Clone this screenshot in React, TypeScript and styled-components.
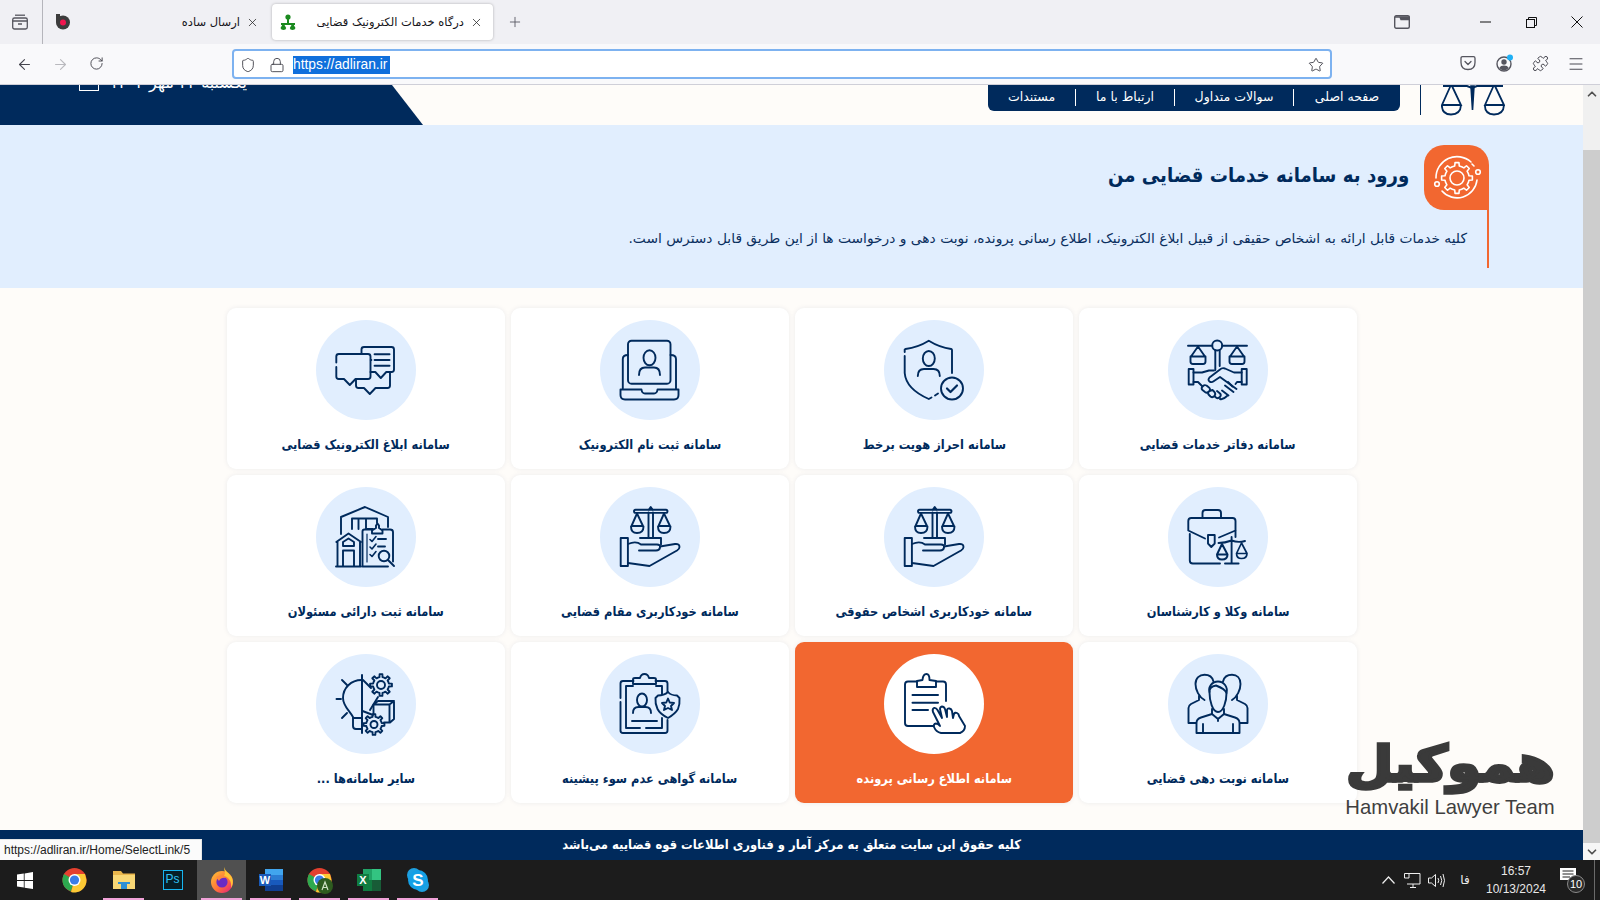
import React from "react";
import styled, { createGlobalStyle } from "styled-components";
import {
  ArrowLeft, ArrowRight, RotateCw, Shield, Lock, Star, X, Plus, Menu, Puzzle, ChevronUp, ChevronDown,
} from "lucide-react";

const NAVY = "#002a5c";
const ORANGE = "#f26730";
const FONT = `"DejaVu Sans", "Noto Sans", sans-serif`;

const Global = createGlobalStyle`
  html, body { margin: 0; padding: 0; width: 1600px; height: 900px; overflow: hidden; }
  body { font-family: ${FONT}; background: #fff; }
  * { box-sizing: border-box; }
`;

const Screen = styled.div`
  position: relative;
  width: 1600px;
  height: 900px;
  display: flex;
  flex-direction: column;
  overflow: hidden;
`;

/* ---------- browser chrome ---------- */
const TabBar = styled.div`
  height: 44px;
  background: #f0f0f4;
  display: flex;
  align-items: center;
  color: #3b3b45;
`;
const TabManager = styled.div`
  width: 43px;
  height: 44px;
  padding-right: 2px;
  border-right: 1px solid #b5b5bb;
  display: flex;
  align-items: center;
  justify-content: center;
`;
const InactiveTab = styled.div`
  width: 229px;
  height: 36px;
  display: flex;
  align-items: center;
  padding: 0 13px 0 12px;
`;
const TabFavicon = styled.div`
  width: 16px;
  height: 16px;
  flex: none;
  display: flex;
`;
const TabTitle = styled.span`
  flex: 1;
  direction: rtl;
  text-align: right;
  font-size: 11.5px;
  color: #15141a;
  white-space: nowrap;
  padding-right: 6px;
`;
const ActiveTab = styled(InactiveTab)`
  width: 221px;
  background: #fff;
  border-radius: 4px;
  box-shadow: 0 0 3px rgba(0, 0, 0, 0.28);
  padding: 0 10px 0 8px;
`;
const NewTab = styled.div`
  width: 44px;
  display: flex;
  justify-content: center;
`;
const WindowControls = styled.div`
  margin-left: auto;
  display: flex;
  align-items: center;
`;
const WinButton = styled.div<{ $w: number; $gap?: number }>`
  width: ${(p) => p.$w}px;
  margin-left: ${(p) => p.$gap ?? 0}px;
  display: flex;
  justify-content: center;
  color: #111;
`;

const NavBar = styled.div`
  height: 41px;
  background: #f9f9fb;
  border-bottom: 1px solid #cfcfd8;
  display: flex;
  align-items: center;
  color: #45454e;
`;
const NavButton = styled.div<{ $dim?: boolean }>`
  width: 36px;
  display: flex;
  justify-content: center;
  opacity: ${(p) => (p.$dim ? 0.35 : 1)};
`;
const NavButtons = styled.div`
  width: 232px;
  padding-left: 6px;
  display: flex;
`;
const UrlBar = styled.div`
  width: 1100px;
  height: 30px;
  background: #fff;
  border: 2px solid #7db2f0;
  border-radius: 4px;
  display: flex;
  align-items: center;
  padding: 1px 5px 0 6px;
  color: #45454e;
`;
const UrlIcon = styled.div<{ $w: number }>`
  width: ${(p) => p.$w}px;
  display: flex;
  justify-content: flex-start;
`;
const UrlText = styled.span`
  background: #0f6fdc;
  color: #fff;
  font-family: "Liberation Sans", sans-serif;
  font-size: 13.8px;
  line-height: 18px;
  width: 97px;
  white-space: nowrap;
`;
const UrlStar = styled.div`
  margin-left: auto;
  display: flex;
  margin-right: 1px;
`;
const NavTools = styled.div`
  flex: 1;
  display: flex;
  justify-content: flex-end;
  padding-right: 6px;
`;

/* ---------- page ---------- */
const Viewport = styled.div`
  flex: 1;
  min-height: 0;
  display: flex;
`;
const Page = styled.div`
  width: 1583px;
  display: flex;
  flex-direction: column;
  background: #fefcf9;
  color: ${NAVY};
`;
const Header = styled.header`
  height: 40px;
  flex: none;
  display: flex;
  justify-content: space-between;
  overflow: hidden;
`;
const DateBand = styled.div`
  width: 423px;
  height: 40px;
  background: ${NAVY};
  clip-path: polygon(0 0, 392px 0, 100% 100%, 0 100%);
  color: #fff;
  display: flex;
  padding-left: 79px;
  align-items: flex-start;
  gap: 9px;
`;
const DateText = styled.span`
  direction: rtl;
  font-size: 16px;
  line-height: 18px;
  margin-top: -11px;
  white-space: nowrap;
  width: 139px;
`;
const CalendarMark = styled.div`
  width: 20px;
  height: 6px;
  border: 1px solid #fff;
  border-top: none;
  border-radius: 0 0 1px 1px;
`;
const HeaderRight = styled.div`
  display: flex;
  padding-right: 78px;
  direction: rtl;
`;
const ScalesSlot = styled.div`
  width: 64px;
  height: 31px;
  display: flex;
`;
const HeaderDivider = styled.div`
  width: 1px;
  height: 30px;
  background: ${NAVY};
  margin: 0 20px;
`;
const MainNav = styled.nav`
  height: 26px;
  background: ${NAVY};
  border-radius: 0 0 6px 6px;
  display: flex;
  align-items: flex-start;
  padding-top: 4px;
`;
const MainNavItem = styled.a<{ $w: number }>`
  width: ${(p) => p.$w}px;
  height: 17px;
  display: flex;
  align-items: center;
  justify-content: center;
  padding-bottom: 3px;
  color: #fff;
  font-size: 12.5px;
  white-space: nowrap;
  border-left: 1px solid #fff;
  &:last-child { border-left: none; }
`;

const Hero = styled.section`
  height: 163px;
  flex: none;
  background: #e1eefe;
  padding: 20px 94px 0 0;
  direction: rtl;
`;
const HeroHead = styled.div`
  display: flex;
  align-items: center;
  gap: 15px;
`;
const GearBox = styled.div`
  width: 65px;
  height: 65px;
  flex: none;
  background: ${ORANGE};
  border-radius: 20px 20px 0 20px;
  display: flex;
  align-items: center;
  justify-content: center;
`;
const HeroTitle = styled.h1`
  margin: 0 0 5px;
  font-size: 20px;
  font-weight: 700;
  color: ${NAVY};
  white-space: nowrap;
  transform: scaleX(0.907);
  transform-origin: right center;
`;
const HeroBody = styled.div`
  height: 58px;
  border-right: 2px solid ${ORANGE};
  padding: 18px 20px 0 0;
`;
const HeroText = styled.p`
  margin: 0;
  font-size: 13.8px;
  line-height: 20px;
  color: #0b2f5e;
  white-space: nowrap;
`;

const Grid = styled.main`
  flex: 1;
  min-height: 0;
  padding: 20px 226px 0 227px;
  display: grid;
  grid-template-columns: repeat(4, 278px);
  grid-auto-rows: 161px;
  gap: 6px;
  direction: rtl;
  align-content: start;
`;
const Card = styled.a<{ $active?: boolean }>`
  background: ${(p) => (p.$active ? ORANGE : "#fff")};
  border-radius: 9px;
  box-shadow: 0 0 5px rgba(0, 42, 92, 0.08);
  display: flex;
  flex-direction: column;
  align-items: center;
  padding-top: 12px;
`;
const Circle = styled.div<{ $active?: boolean }>`
  width: 100px;
  height: 100px;
  border-radius: 50%;
  background: ${(p) => (p.$active ? "#fff" : "#e1eefe")};
  flex: none;
`;
const CardLabel = styled.span<{ $active?: boolean }>`
  margin-top: 15px;
  font-size: 13px;
  line-height: 20px;
  font-weight: 700;
  color: ${(p) => (p.$active ? "#fff" : NAVY)};
  white-space: nowrap;
  transform: scaleX(0.88);
`;
const Footer = styled.footer`
  height: 30px;
  flex: none;
  background: ${NAVY};
  color: #fff;
  direction: rtl;
  display: flex;
  align-items: center;
  justify-content: center;
  padding-bottom: 2px;
`;
const FooterText = styled.span`
  font-size: 13px;
  font-weight: 700;
  white-space: nowrap;
  transform: scaleX(0.89);
`;

const ScrollBar = styled.div`
  width: 17px;
  background: #f0f0f0;
  display: flex;
  flex-direction: column;
  align-items: center;
  color: #505050;
`;
const ScrollArrow = styled.div<{ $light?: boolean }>`
  height: 17px;
  width: 100%;
  flex: none;
  display: flex;
  align-items: center;
  justify-content: center;
  background: ${(p) => (p.$light ? "#f6f6f6" : "transparent")};
`;
const ScrollTrack = styled.div`
  flex: 1;
  width: 100%;
  padding-top: 48px;
  display: flex;
`;
const ScrollThumb = styled.div`
  flex: 1;
  background: #cdcdcd;
`;

/* ---------- overlays ---------- */
const StatusTip = styled.div`
  position: absolute;
  left: 0;
  bottom: 40px;
  width: 202px;
  height: 21px;
  background: #fbfbfb;
  border-top: 1px solid #e6e6e6;
  border-right: 1px solid #e6e6e6;
  color: #222;
  font-family: "Liberation Sans", sans-serif;
  font-size: 12px;
  line-height: 20px;
  padding-left: 4px;
  white-space: nowrap;
`;
const Watermark = styled.div`
  position: absolute;
  left: 1344px;
  top: 731px;
  width: 212px;
  height: 90px;
  display: flex;
  flex-direction: column;
  align-items: center;
  pointer-events: none;
`;
const WatermarkFa = styled.div`
  direction: rtl;
  font-family: ${FONT};
  font-weight: 700;
  font-size: 56px;
  line-height: 65px;
  height: 65px;
  color: #3a3a3a;
  -webkit-text-stroke: 4px #3a3a3a;
  white-space: nowrap;
  transform: scale(0.96, 0.88);
`;
const WatermarkEn = styled.div`
  font-family: "Liberation Sans", sans-serif;
  font-size: 20.3px;
  line-height: 22px;
  color: #3f3f3f;
  white-space: nowrap;
`;

/* ---------- taskbar ---------- */
const Taskbar = styled.div`
  height: 40px;
  flex: none;
  background: #1c1c1c;
  display: flex;
  align-items: center;
  color: #fff;
`;
const StartButton = styled.div`
  width: 50px;
  height: 40px;
  display: flex;
  align-items: center;
  justify-content: center;
`;
const TaskIcon = styled.div<{ $active?: boolean; $open?: boolean }>`
  position: relative;
  width: 49px;
  height: 40px;
  display: flex;
  align-items: center;
  justify-content: center;
  background: ${(p) => (p.$active ? "#505050" : "transparent")};
  &::after {
    content: "";
    display: ${(p) => (p.$open ? "block" : "none")};
    position: absolute;
    left: 4px;
    right: 4px;
    bottom: 0;
    height: 2px;
    background: #f0a2d8;
  }
`;
const Tray = styled.div`
  margin-left: auto;
  display: flex;
  align-items: center;
  height: 40px;
`;
const TrayIcon = styled.div<{ $w: number }>`
  width: ${(p) => p.$w}px;
  display: flex;
  justify-content: center;
`;
const Lang = styled.span`
  font-size: 12px;
  color: #eee;
  width: 34px;
  text-align: center;
`;
const Clock = styled.div`
  width: 68px;
  text-align: center;
  font-family: "Liberation Sans", sans-serif;
  font-size: 12px;
  line-height: 18px;
  color: #e8e8e8;
`;
const Notify = styled.div`
  width: 34px;
  margin-left: 10px;
  position: relative;
  height: 24px;
`;
const NotifyCount = styled.span`
  position: absolute;
  left: 7px;
  top: 7px;
  width: 18px;
  height: 18px;
  border: 1px solid #8a8a8a;
  border-radius: 50%;
  background: #2a2a2a;
  font-family: "Liberation Sans", sans-serif;
  font-size: 11px;
  line-height: 16px;
  text-align: center;
  color: #fff;
`;
const DesktopEdge = styled.div`
  width: 1px;
  height: 40px;
  background: #6a6a6a;
  margin-right: 5px;
`;
const MessageSvg = styled.svg`
  position: absolute;
  left: 0;
  top: 0;
`;

/* ---------- drawings ---------- */
const gearPath = (cx: number, cy: number, ro: number, ri: number, n: number) => {
  let d = "";
  const step = (Math.PI * 2) / n;
  for (let i = 0; i < n; i++) {
    const a = i * step;
    const pts: [number, number][] = [
      [a - step * 0.5, ri],
      [a - step * 0.24, ri],
      [a - step * 0.16, ro],
      [a + step * 0.16, ro],
      [a + step * 0.24, ri],
    ];
    pts.forEach(([t, r], k) => {
      d += `${i === 0 && k === 0 ? "M" : "L"}${(cx + r * Math.cos(t)).toFixed(2)} ${(cy + r * Math.sin(t)).toFixed(2)}`;
    });
  }
  return d + "Z";
};

const Svg100: React.FC<{ children: React.ReactNode }> = ({ children }) => (
  <svg width="100" height="100" viewBox="0 0 100 100" fill="none" stroke={NAVY} strokeWidth="1.9" strokeLinecap="round" strokeLinejoin="round">
    {children}
  </svg>
);

const IconHandshake = () => (
  <Svg100>
    <path d="M20 25.7H44.3M54.2 25.7H79" />
    <circle cx="49.2" cy="25.5" r="5" />
    <path d="M47.3 30.3V50M51.7 30.3V46" />
    <path d="M30 26.5L23 36.5H37L30 26.5ZM22.5 36.5V41.5Q22.5 44 25 44H35Q37.5 44 37.5 41.5V36.5" />
    <path d="M69 26.5L62 36.5H76L69 26.5ZM61.5 36.5V41.5Q61.5 44 64 44H74Q76.5 44 76.5 41.5V36.5" />
    <rect x="20.7" y="49" width="4.8" height="15.5" />
    <rect x="73.7" y="49" width="5" height="15.5" />
    <path d="M25.5 52.5H34L41 50.5H46M73.7 52.5H66L57 48.5Q54 47.5 52 49.5L41.5 57.5Q39.5 60 41.5 61.5Q43.5 63 46 61L52 57L68.5 69" />
    <path d="M25.5 62H30L34.5 66.5" />
    <path d="M73.7 62H69L67.5 64M64.5 66.5L60 62M65.5 72L57 65.5M60.5 75.5L54 70.5M52 79Q55 80 59 76" />
    <path d="M35 66Q32.5 68 34.5 70L37 72Q39 73.5 41 71.5Q43 69 41 67.5L38.5 65.5Q36.5 64.5 35 66ZM41.5 71Q39 73 41 75L42.5 76.5Q44.5 78 46.5 76Q48 74 46.5 72L44.5 70ZM46.5 76L48 77.5Q50 79 52 77Q53.5 75 52 73.5L49 71" />
  </Svg100>
);
const IconShieldUser = () => (
  <Svg100>
    <path d="M20.7 32V29.5L21.5 29Q34 27.5 44.8 20.8Q55.5 27.5 67.2 29Q68 29.2 68 30V53" />
    <path d="M20.7 36V53Q22 69 44.8 79L47.5 77.5M51 75.5L54 73.5" />
    <ellipse cx="44.8" cy="38.5" rx="6" ry="7.5" />
    <path d="M33.8 56Q33.8 49 40 49H49.5Q55.8 49 55.8 56" />
    <circle cx="68" cy="68.5" r="11" />
    <path d="M63 68.5L66.5 72L73 65.5" strokeWidth="2.2" />
  </Svg100>
);
const IconLaptopUser = () => (
  <Svg100>
    <rect x="28" y="20.7" width="42.5" height="43" rx="3.5" />
    <ellipse cx="49.5" cy="37.8" rx="6" ry="7.5" />
    <path d="M39 55Q39 47.5 45 47.5H54Q60 47.5 60 55" />
    <path d="M28 35Q22.8 35 22.8 39V68.5M70.5 35Q76 35 76 39V68.5" />
    <path d="M20.5 69.5H41.5Q42 73.5 45 73.5H54Q57 73.5 57.5 69.5H78.5V75Q78.5 79.5 74 79.5H25Q20.5 79.5 20.5 75V69.5Z" />
  </Svg100>
);
const IconChats = () => (
  <Svg100>
    <path d="M45.5 33V29.5Q45.5 27 48 27H75.5Q78 27 78 29.5V49.5Q78 52 75.5 52H70.3L64.8 58L59.3 52H54.5" />
    <path d="M58.6 34.3H73.5M58.6 40H73.5M58.6 45.7H73.5M54.8 40H55.3" strokeWidth="2" />
    <path d="M20.3 42.5V36.5Q20.3 34 22.8 34H52Q54.5 34 54.5 36.5V56.5Q54.5 59 52 59H39.5L33.8 65L28 59H22.8Q20.3 59 20.3 56.5V47" />
    <path d="M40 59.5V65.5Q40 68 42.5 68H48L53.8 74L59.5 68H71.5Q74 68 74 65.5V52.5" />
  </Svg100>
);
const IconBriefcase = () => (
  <Svg100>
    <path d="M34.5 30.5V26Q34.5 23 37.5 23H50Q53 23 53 26V30.5" />
    <path d="M37 51.5L20.3 43.5V34Q20.3 31 23.3 31H64.5Q67.5 31 67.5 34V43.5L51 50.5" />
    <path d="M40 48V56.5L43.3 60L46.7 56.5V48H40Z" />
    <path d="M21.8 47V73.5Q21.8 76.5 24.8 76.5H52" />
    <path d="M67.5 44V50" />
    <path d="M63.6 50V76.5M57 76.5H70.6M50.5 56Q57 56 63.6 53.5Q70 56 77 54" />
    <path d="M54 57L49 67.5H59.5L54 57ZM49 67.5Q49 72.5 54 72.5Q59.5 72.5 59.5 67.5" strokeWidth="2" />
    <path d="M73.5 56L68.5 66.5H79L73.5 56ZM68.5 66.5Q68.5 71.5 73.5 71.5Q79 71.5 79 66.5" strokeWidth="1.7" />
  </Svg100>
);
const IconHandScales = () => (
  <Svg100>
    <path d="M48.5 51V25.5M53 51V25.5M49 22.5L50.7 20L52.5 22.5" />
    <rect x="34" y="22.7" width="33.5" height="3.2" rx="1.6" />
    <path d="M37 26.5L31.5 39H43L37 26.5ZM31 39.5Q31 46 37 46Q43.5 46 43.5 39.5" />
    <path d="M64 26.5L58.5 39H70L64 26.5ZM58 39.5Q58 46 64 46Q70.5 46 70.5 39.5" />
    <path d="M40 51H61V57.5" />
    <rect x="20.7" y="51" width="7.2" height="28" />
    <path d="M28 57Q36 53.5 41 57.5H57Q60.5 57.5 60 60.5Q59.5 63.5 56 63.5H39" />
    <path d="M60 59.5L75 57Q79.5 56.5 79.5 60Q79.5 62 77 63.5L49.5 79L28 76" />
  </Svg100>
);
const IconBuilding = () => (
  <Svg100>
    <path d="M25 47V30L49 20L72 30V40" />
    <path d="M36 42V31.5H61V36M42.5 31.5V42M50 31.5V42H57" />
    <path d="M20.3 55L32.5 46.5L45 55M21.5 55V79M44 55V79M20 79.5H45" />
    <path d="M27 59V55L32.5 51.5L38 55V59H27ZM27 79V63.5H38V79" />
    <path d="M46.5 79.5V44.5Q46.5 42.5 48.5 42.5H55.5M66.5 42.5H74Q77 42.5 77 45V74.5M47 79.5H72" />
    <path d="M51 47V75" strokeWidth="1.2" />
    <path d="M56 46.5V43.5L60 41V38.5L61.5 36.5L63 38.5V41L66.5 43.5V46.5H56Z" />
    <path d="M54 52.5L56 54.5L60 49.5M54 60L56 62L60 57M54 67.5L56 69.5L60 64.5" strokeWidth="1.6" />
    <path d="M62 52H70M62 59.5H69" />
    <circle cx="68" cy="69" r="5.3" />
    <path d="M72 73L78 79" strokeWidth="2" />
  </Svg100>
);
const IconPeople = () => (
  <Svg100>
    <path d="M36.5 46C31 43 27.5 36 27.5 30C27.5 24 31.5 20.8 36.5 20.8C41 20.8 44.5 23.5 45.5 27.5" />
    <path d="M55 27.5C56 23.5 59.5 20.8 64 20.8C69 20.8 72.5 24 72.5 30C72.5 36 69 43 64 46" />
    <path d="M31 42V46L23 50Q20.5 51.5 20.5 54V69H28M69 42V46L77 50Q79.5 51.5 79.5 54V69H72" />
    <path d="M41.5 38.5C41 34 44 32 48 31.5C52 33 57 35 58.5 39C58.5 47 55.5 58 50 58C44.5 58 41.5 47 41.5 38.5Z" />
    <path d="M41.5 38C40 33 44 27.5 50 27.5C56 27.5 60 33 58.5 39" />
    <path d="M44 55V60L33 63.5Q28.5 65 28.5 69V79H71.5V69Q71.5 65 67 63.5L56 60V55" />
    <path d="M44 60L50 65L56 60M50 65V67M35 70V79M65 70V79" />
  </Svg100>
);
const IconClipboardHand = () => (
  <Svg100>
    <path d="M33 27.5H24Q21 27.5 21 30.5V69Q21 72 24 72H50M52 27.5H59Q62 27.5 62 30.5V47" />
    <path d="M33 27V33H52V27L45.5 26Q45.5 20 42.5 20Q39 20 38.5 26L33 27Z" />
    <path d="M28.5 41H54M28.5 48.7H54M28.5 56H44" strokeWidth="2" />
    <path d="M57 79Q52 78 50 73Q49 70 52 69.5Q54 69.5 56 72L49 58Q48 55 50 54Q52 53.5 53.5 56L58 64L56 55Q56 53 58 52.5Q60 52.5 61 55L63 63L63 56Q63.5 54 65.5 54.5Q67.5 55 68 57L69 64L70 60Q71 58 73 59Q75 60 75 62L81 72Q81 77 76 79Z" />
  </Svg100>
);
const IconClipboardBadge = () => (
  <Svg100>
    <path d="M33.5 27H23Q20.5 27 20.5 29.5V44M20.5 48V76.5Q20.5 79 23 79H65Q67.5 79 67.5 76.5V66M67.5 38V29.5Q67.5 27 65 27H55.5" />
    <path d="M33 30V25.5Q33 24 35 24H40Q41 20 44.5 20Q48 20 49 24H54Q56 24 56 25.5V30H33Z" />
    <path d="M33 32H26V74H40M46 74H62V64M62 40V32H56" />
    <ellipse cx="42" cy="46" rx="5" ry="6.5" />
    <path d="M33 59Q33 53 38.5 53H45.5Q51 53 51 59" />
    <path d="M32 67H57" />
    <path d="M68 38Q71 41.5 77 41.5L79.5 44Q80 50 78 55Q75 60 68 64Q60 60 57.5 55Q55 50 55.5 44L58 41.5Q64 41.5 68 38Z" />
    <path d="M68 44.5L69.7 48.5L74 49L71 52L72 56L68 54L64 56L65 52L62 49L66.3 48.5Z" />
  </Svg100>
);
const IconBulbGears = () => (
  <Svg100>
    <path d="M46 21V79" strokeWidth="2" />
    <path d="M45.5 26C35 26 27 34 27 44C27 52 33 56 37 63V72Q37 75 40 75H45" />
    <path d="M37 64H45" />
    <path d="M26 26L31 31M20.5 45H25M26 64L31 59" />
    <path d="M47 26L55 34M46.5 57L57 61M54 56L62 43" />
    <path d={gearPath(65, 31, 11, 8, 8)} />
    <circle cx="65" cy="31" r="4" />
    <path d={gearPath(58, 70.5, 10.5, 7.8, 8)} />
    <circle cx="58" cy="70.5" r="3.5" />
    <path d="M57.5 60V50.5L62 47H78V65L74 68.5H68M57.5 50.5H73.5V68M73.5 50.5L78 47" />
  </Svg100>
);

const GearLogo = () => (
  <svg width="54" height="54" viewBox="0 0 54 54" fill="none" stroke="#fff" strokeWidth="1.6" strokeLinecap="round" strokeLinejoin="round">
    <path d={gearPath(27, 27, 15.5, 12.2, 8)} />
    <circle cx="27" cy="27" r="7" />
    <path d="M12 40A20 20 0 0 0 47 29M41 11A21 21 0 0 0 6 27M42 13L44 15" />
    <circle cx="7" cy="33" r="2.3" />
    <circle cx="48" cy="21" r="2.3" />
  </svg>
);

const HeaderScales = () => (
  <svg width="64" height="31" viewBox="0 0 64 31" fill="none" stroke={NAVY} strokeWidth="1.6">
    <path d="M2 1H26L31 3L36 1H62" strokeWidth="2" />
    <path d="M9.5 1L1 20H20L11 1ZM0.8 20Q1 29.5 10 29.5Q19.5 29.5 20 20" strokeWidth="1.8" />
    <path d="M52.5 1L44 20H63L54 1ZM43.8 20Q44 29.5 53 29.5Q62.5 29.5 63 20" strokeWidth="1.8" />
    <path d="M30 1H33L31.5 25Z" fill={NAVY} />
  </svg>
);

const TabManagerIcon = () => (
  <svg width="16" height="16" viewBox="0 0 16 16" fill="none" stroke="#55555e" strokeWidth="1.3">
    <path d="M3 1.2H13" />
    <rect x="0.7" y="4" width="14.6" height="11" rx="1.8" />
    <path d="M0.7 7H15.3M6 10H10" />
  </svg>
);
const RecordFavicon = () => (
  <svg width="16" height="16" viewBox="0 0 16 16">
    <circle cx="8" cy="8.5" r="7" fill="#3c3c3c" />
    <rect x="1" y="0" width="4" height="8" fill="#3c3c3c" />
    <circle cx="8" cy="8.5" r="3" fill="#f2154f" />
  </svg>
);
const CourtFavicon = () => (
  <svg width="16" height="16" viewBox="0 0 16 16" fill="#1b8a1f">
    <circle cx="8" cy="3" r="2.6" />
    <path d="M7 5H9V9H15V11H13.8L15.5 14Q15 16 12.5 16Q10 16 9.8 14L11.5 11H4.5L6.2 14Q6 16 3.5 16Q1 16 0.5 14L2.2 11H1V9H7Z" />
  </svg>
);
const FolderWin = () => (
  <svg width="16" height="14" viewBox="0 0 16 14" fill="none" stroke="#55555e" strokeWidth="1.4">
    <rect x="0.7" y="0.7" width="14.6" height="12.6" rx="1.5" />
    <path d="M1 2H6L7 4.5H15V2H1Z" fill="#55555e" />
  </svg>
);
const Restore = () => (
  <svg width="11" height="11" viewBox="0 0 11 11" fill="none" stroke="#111" strokeWidth="1">
    <rect x="0.5" y="2.5" width="8" height="8" />
    <path d="M2.5 2.5V0.5H10.5V8.5H8.5" />
  </svg>
);
const ThinClose = () => (
  <svg width="12" height="12" viewBox="0 0 12 12" stroke="#111" strokeWidth="1"><path d="M0.5 0.5L11.5 11.5M11.5 0.5L0.5 11.5" /></svg>
);
const ThinMin = () => (
  <svg width="11" height="2" viewBox="0 0 11 2" stroke="#111" strokeWidth="1"><path d="M0 1H11" /></svg>
);
const Pocket = () => (
  <svg width="16" height="16" viewBox="0 0 16 16" fill="none" stroke="#55555e" strokeWidth="1.3" strokeLinecap="round" strokeLinejoin="round">
    <path d="M2.5 1.7H13.5Q15 1.7 15 3.2V7.5Q15 14.5 8 14.5Q1 14.5 1 7.5V3.2Q1 1.7 2.5 1.7Z" />
    <path d="M5 6.5L8 9.5L11 6.5" />
  </svg>
);
const Account = () => (
  <svg width="18" height="18" viewBox="0 0 18 18" overflow="visible">
    <circle cx="9" cy="9" r="7" fill="none" stroke="#55555e" strokeWidth="1.4" />
    <circle cx="9" cy="7" r="2.7" fill="#55555e" />
    <path d="M4.2 13Q5.5 10.6 9 10.6Q12.5 10.6 13.8 13Q12 15.4 9 15.4Q6 15.4 4.2 13Z" fill="#55555e" />
    <circle cx="15" cy="2.5" r="3" fill="#1fb0f5" />
  </svg>
);

const WinLogo = () => (
  <svg width="16" height="17" viewBox="0 0 16 17" fill="#fff">
    <path d="M0 2.5L6.8 1.5V8H0ZM7.6 1.4L16 0V8H7.6ZM0 9H6.8V15.5L0 14.5ZM7.6 9H16V17L7.6 15.7Z" />
  </svg>
);
const ChromeIcon: React.FC<{ badge?: boolean }> = ({ badge }) => (
  <svg width="26" height="26" viewBox="0 0 26 26" overflow="visible">
    <circle cx="12.5" cy="13" r="12" fill="#e4402f" />
    <path d="M12.5 13L2 7A12 12 0 0 0 9 24.5Z" fill="#2da94f" />
    <path d="M12.5 13L9 25A12 12 0 0 0 24.5 13L23 7H12.5Z" fill="#fcc934" />
    <circle cx="12.5" cy="13" r="6" fill="#fff" />
    <circle cx="12.5" cy="13" r="4.6" fill="#3a7de8" />
    {badge && <circle cx="18" cy="19" r="8" fill="#2e5c1f" />}
    {badge && <path d="M15 23L18 15L21 23M16 20.5H20" fill="none" stroke="#cfe2c4" strokeWidth="1.2" />}
  </svg>
);
const FolderIcon = () => (
  <svg width="22" height="20" viewBox="0 0 22 20">
    <path d="M0 1H8L10 3.5H22V19H0Z" fill="#e9b64c" />
    <path d="M0 5H22V19H0Z" fill="#f8d775" />
    <path d="M5 12H17V14H14V19H8V14H5Z" fill="#2d8fd5" />
  </svg>
);
const PsBox = styled.div`
  width: 20px;
  height: 20px;
  border: 1.5px solid #18b5f0;
  background: #061e26;
  color: #2fc2f5;
  font-family: "Liberation Sans", sans-serif;
  font-size: 12px;
  line-height: 17px;
  text-align: center;
`;
const FirefoxIcon = () => (
  <svg width="24" height="26" viewBox="0 0 24 26">
    <defs>
      <linearGradient id="ffx" x1="0" y1="0" x2="1" y2="1">
        <stop offset="0" stopColor="#ffc534" />
        <stop offset="0.55" stopColor="#ff7139" />
        <stop offset="1" stopColor="#e31587" />
      </linearGradient>
    </defs>
    <circle cx="12" cy="15" r="11" fill="url(#ffx)" />
    <path d="M14 0C15 4 18 5 21 9C24 13 23 18 21 21C22 15 19 10 14 9C16 6 14 3 14 0Z" fill="#ffc534" />
    <circle cx="12" cy="15" r="5.6" fill="#6a2bc4" />
    <path d="M6 10Q12 6 16 11Q11 10 9 14Z" fill="#ff8a3c" />
  </svg>
);
const WordIcon = () => (
  <svg width="24" height="22" viewBox="0 0 24 22">
    <rect x="6" y="0" width="18" height="6" fill="#41a5ee" />
    <rect x="6" y="6" width="18" height="5" fill="#2b7cd3" />
    <rect x="6" y="11" width="18" height="5" fill="#185abd" />
    <rect x="6" y="16" width="18" height="6" fill="#103f91" />
    <rect x="0" y="5" width="12" height="12" fill="#1a5ab8" />
    <text x="6" y="15" textAnchor="middle" fontFamily="Liberation Sans" fontWeight="700" fontSize="11" fill="#fff">W</text>
  </svg>
);
const ExcelIcon = () => (
  <svg width="24" height="22" viewBox="0 0 24 22">
    <rect x="6" y="0" width="9" height="11" fill="#21a366" />
    <rect x="15" y="0" width="9" height="11" fill="#33c481" />
    <rect x="6" y="11" width="9" height="11" fill="#107c41" />
    <rect x="15" y="11" width="9" height="11" fill="#185c37" />
    <rect x="0" y="5" width="12" height="12" fill="#107c41" />
    <text x="6" y="15" textAnchor="middle" fontFamily="Liberation Sans" fontWeight="700" fontSize="11" fill="#fff">X</text>
  </svg>
);
const SkypeIcon = () => (
  <svg width="22" height="24" viewBox="0 0 22 24">
    <circle cx="7" cy="7" r="7" fill="#1ea0e0" />
    <circle cx="15" cy="17" r="7" fill="#1ea0e0" />
    <circle cx="11" cy="12" r="10" fill="#14a0e6" />
    <text x="11" y="18" textAnchor="middle" fontFamily="Liberation Sans" fontWeight="700" fontSize="17" fill="#fff">S</text>
  </svg>
);
const NetworkIcon = () => (
  <svg width="17" height="15" viewBox="0 0 17 15" fill="none" stroke="#eee" strokeWidth="1">
    <path d="M3.5 0.5H16V11H3M0.5 0.5H5V5H0.5ZM9 11V14M6 14.5H12" />
  </svg>
);
const SoundIcon = () => (
  <svg width="17" height="15" viewBox="0 0 17 15" fill="none" stroke="#eee" strokeWidth="1">
    <path d="M0.5 5V10H3.5L7.5 13.5V1.5L3.5 5ZM10 5Q11.5 7.5 10 10M12.5 3Q15 7.5 12.5 12M15 1Q18 7.5 15 14" />
  </svg>
);
const TrayChevron = () => (
  <svg width="13" height="8" viewBox="0 0 13 8" fill="none" stroke="#eee" strokeWidth="1.2"><path d="M0.5 7.5L6.5 1L12.5 7.5" /></svg>
);
const MessageIcon = () => (
  <MessageSvg width="17" height="14" viewBox="0 0 17 14">
    <path d="M0 0H16V12H0Z" fill="#fff" />
    <path d="M2.5 3H13.5M2.5 6H13.5M2.5 9H10" stroke="#222" strokeWidth="1" />
  </MessageSvg>
);

const cards: { label: string; icon: React.ReactNode; active?: boolean }[] = [
  { label: "سامانه دفاتر خدمات قضایی", icon: <IconHandshake /> },
  { label: "سامانه احراز هویت برخط", icon: <IconShieldUser /> },
  { label: "سامانه ثبت نام الکترونیک", icon: <IconLaptopUser /> },
  { label: "سامانه ابلاغ الکترونیک قضایی", icon: <IconChats /> },
  { label: "سامانه وکلا و کارشناسان", icon: <IconBriefcase /> },
  { label: "سامانه خودکاربری اشخاص حقوقی", icon: <IconHandScales /> },
  { label: "سامانه خودکاربری مقام قضایی", icon: <IconHandScales /> },
  { label: "سامانه ثبت دارائی مسئولان", icon: <IconBuilding /> },
  { label: "سامانه نوبت دهی قضایی", icon: <IconPeople /> },
  { label: "سامانه اطلاع رسانی پرونده", icon: <IconClipboardHand />, active: true },
  { label: "سامانه گواهی عدم سوء پیشینه", icon: <IconClipboardBadge /> },
  { label: "سایر سامانه‌ها ...", icon: <IconBulbGears /> },
];

const navItems = [
  { t: "صفحه اصلی", w: 107 },
  { t: "سوالات متداول", w: 119 },
  { t: "ارتباط با ما", w: 99 },
  { t: "مستندات", w: 87 },
];

const taskApps: { node: React.ReactNode; active?: boolean; open?: boolean }[] = [
  { node: <ChromeIcon /> },
  { node: <FolderIcon />, open: true },
  { node: <PsBox>Ps</PsBox> },
  { node: <FirefoxIcon />, active: true, open: true },
  { node: <WordIcon />, open: true },
  { node: <ChromeIcon badge />, open: true },
  { node: <ExcelIcon />, open: true },
  { node: <SkypeIcon />, open: true },
];

export default function App() {
  return (
    <Screen>
      <Global />
      <TabBar>
        <TabManager><TabManagerIcon /></TabManager>
        <InactiveTab>
          <TabFavicon><RecordFavicon /></TabFavicon>
          <TabTitle>ارسال ساده</TabTitle>
          <X size={13} strokeWidth={1.4} color="#222" />
        </InactiveTab>
        <ActiveTab>
          <TabFavicon><CourtFavicon /></TabFavicon>
          <TabTitle>درگاه خدمات الکترونیک قضایی</TabTitle>
          <X size={13} strokeWidth={1.4} color="#222" />
        </ActiveTab>
        <NewTab><Plus size={16} strokeWidth={1.3} color="#55555e" /></NewTab>
        <WindowControls>
          <WinButton $w={60}><FolderWin /></WinButton>
          <WinButton $w={46} $gap={30}><ThinMin /></WinButton>
          <WinButton $w={46}><Restore /></WinButton>
          <WinButton $w={46}><ThinClose /></WinButton>
        </WindowControls>
      </TabBar>
      <NavBar>
        <NavButtons>
          <NavButton><ArrowLeft size={17} strokeWidth={1.5} /></NavButton>
          <NavButton $dim><ArrowRight size={17} strokeWidth={1.5} /></NavButton>
          <NavButton><RotateCw size={15} strokeWidth={1.5} /></NavButton>
        </NavButtons>
        <UrlBar>
          <UrlIcon $w={29}><Shield size={16} strokeWidth={1.4} /></UrlIcon>
          <UrlIcon $w={24}><Lock size={16} strokeWidth={1.4} /></UrlIcon>
          <UrlText>https://adliran.ir</UrlText>
          <UrlStar><Star size={16} strokeWidth={1.4} /></UrlStar>
        </UrlBar>
        <NavTools>
          <NavButton><Pocket /></NavButton>
          <NavButton><Account /></NavButton>
          <NavButton><Puzzle size={17} strokeWidth={1.4} /></NavButton>
          <NavButton><Menu size={18} strokeWidth={1.3} /></NavButton>
        </NavTools>
      </NavBar>
      <Viewport>
        <Page>
          <Header>
            <DateBand>
              <CalendarMark />
              <DateText>یکشنبه ۲۲ مهر ۱۴۰۳</DateText>
            </DateBand>
            <HeaderRight>
              <ScalesSlot><HeaderScales /></ScalesSlot>
              <HeaderDivider />
              <MainNav>
                {navItems.map((n) => (
                  <MainNavItem key={n.t} $w={n.w}>{n.t}</MainNavItem>
                ))}
              </MainNav>
            </HeaderRight>
          </Header>
          <Hero>
            <HeroHead>
              <GearBox><GearLogo /></GearBox>
              <HeroTitle>ورود به سامانه خدمات قضایی من</HeroTitle>
            </HeroHead>
            <HeroBody>
              <HeroText>کلیه خدمات قابل ارائه به اشخاص حقیقی از قبیل ابلاغ الکترونیک، اطلاع رسانی پرونده، نوبت دهی و درخواست ها از این طریق قابل دسترس است.</HeroText>
            </HeroBody>
          </Hero>
          <Grid>
            {cards.map((c) => (
              <Card key={c.label} $active={c.active}>
                <Circle $active={c.active}>{c.icon}</Circle>
                <CardLabel $active={c.active}>{c.label}</CardLabel>
              </Card>
            ))}
          </Grid>
          <Footer><FooterText>کلیه حقوق این سایت متعلق به مرکز آمار و فناوری اطلاعات قوه قضاییه می‌باشد</FooterText></Footer>
        </Page>
        <ScrollBar>
          <ScrollArrow><ChevronUp size={14} strokeWidth={3} /></ScrollArrow>
          <ScrollTrack><ScrollThumb /></ScrollTrack>
          <ScrollArrow $light><ChevronDown size={14} strokeWidth={3} /></ScrollArrow>
        </ScrollBar>
      </Viewport>
      <Taskbar>
        <StartButton><WinLogo /></StartButton>
        {taskApps.map((a, i) => (
          <TaskIcon key={i} $active={a.active} $open={a.open}>{a.node}</TaskIcon>
        ))}
        <Tray>
          <TrayIcon $w={24}><TrayChevron /></TrayIcon>
          <TrayIcon $w={24}><NetworkIcon /></TrayIcon>
          <TrayIcon $w={24}><SoundIcon /></TrayIcon>
          <Lang>فا</Lang>
          <Clock>16:57<br />10/13/2024</Clock>
          <Notify><MessageIcon /><NotifyCount>10</NotifyCount></Notify>
          <DesktopEdge />
        </Tray>
      </Taskbar>
      <StatusTip>https://adliran.ir/Home/SelectLink/5</StatusTip>
      <Watermark>
        <WatermarkFa>هموکیل</WatermarkFa>
        <WatermarkEn>Hamvakil Lawyer Team</WatermarkEn>
      </Watermark>
    </Screen>
  );
}
